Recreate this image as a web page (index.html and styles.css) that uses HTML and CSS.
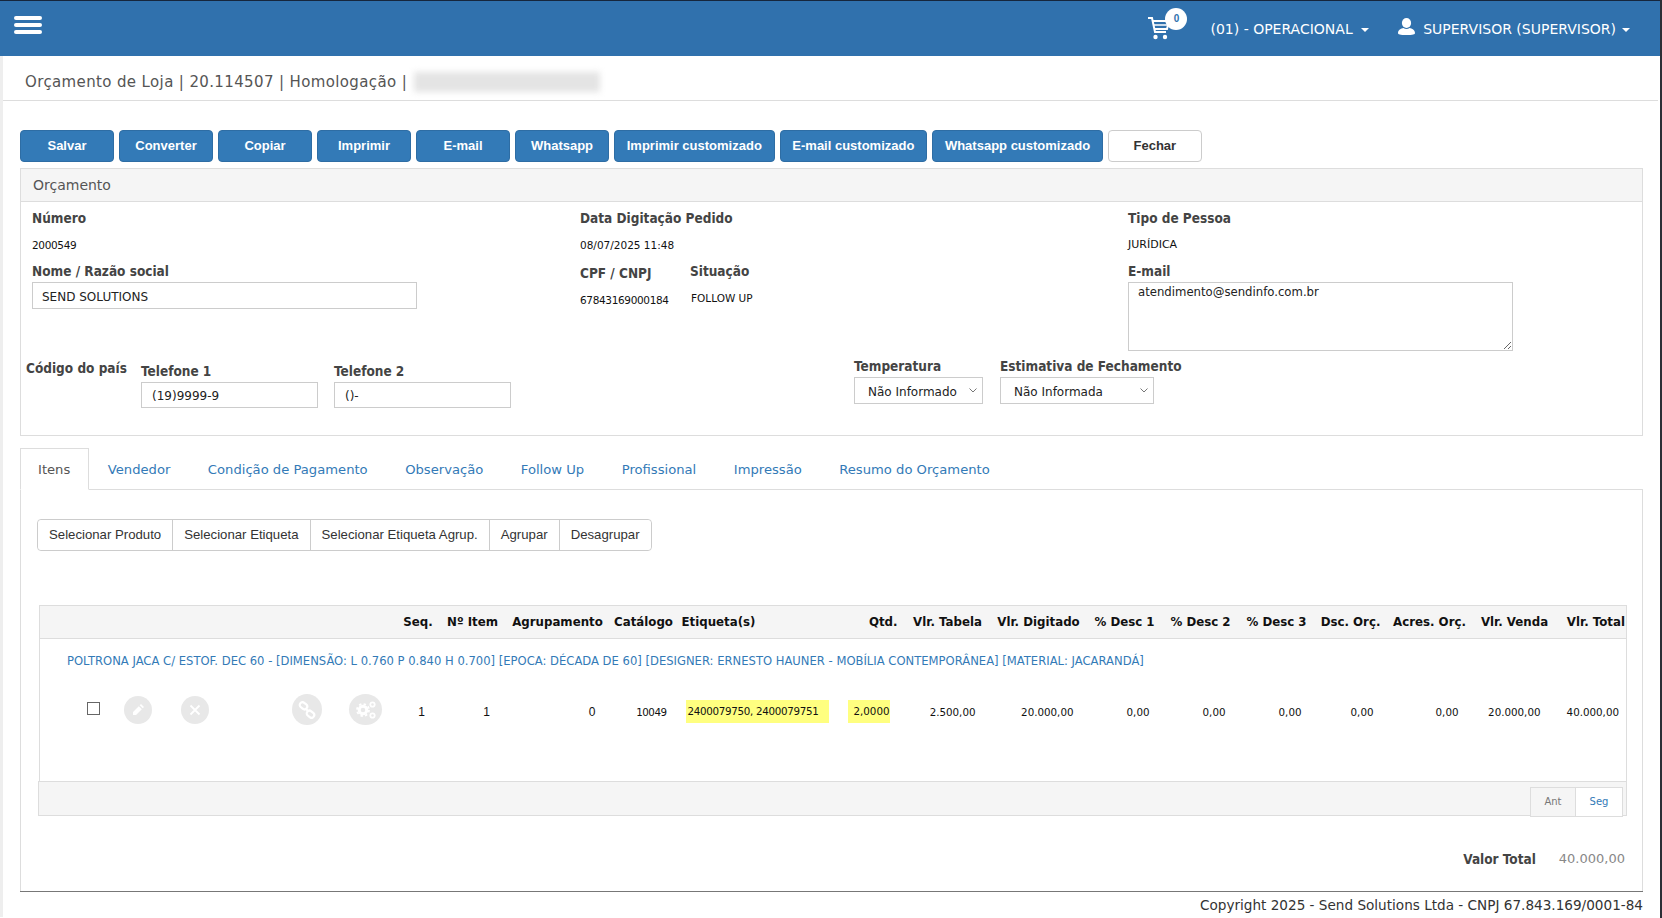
FILE: index.html
```html
<!DOCTYPE html>
<html lang="pt-BR">
<head>
  <meta charset="UTF-8">
  <title>Orçamento de Loja</title>
  <link rel="stylesheet" href="styles.css">
</head>
<body>
  <header class="topbar">
    <div class="burger"><span></span><span></span><span></span></div>
    <div class="topbar-right">
      <div class="cart">
        <svg width="24" height="25" viewBox="0 0 24 25" fill="none" stroke="#fff" stroke-width="2">
          <path d="M1 2h4l3 14h11"/>
          <path d="M6 5h16l-2 8H7.5"/>
          <path d="M7 9h14" stroke-width="1.5"/>
          <circle cx="8.5" cy="21" r="2.2" fill="#fff" stroke="none"/>
          <circle cx="18" cy="21" r="2.2" fill="#fff" stroke="none"/>
        </svg>
        <span class="cart-badge">0</span>
      </div>
      <div class="top-menu store">(01) - OPERACIONAL <i class="caret"></i></div>
      <div class="top-menu user">
        <svg width="17" height="17" viewBox="0 0 17 17" fill="#fff">
          <ellipse cx="8.5" cy="5" rx="4.6" ry="5"/>
          <path d="M0 15c0-3 3-4.500 5.500-5 1.500 1.200 4.500 1.200 6 0 2.500.5 5.500 2 5.500 5 0 1.500-2 2-8.500 2S0 16.500 0 15z"/>
        </svg>
        SUPERVISOR (SUPERVISOR) <i class="caret"></i>
      </div>
    </div>
  </header>

  <div class="page">
    <div class="breadcrumb">
      <span>Orçamento de Loja | 20.114507 | Homologação |</span>
      <div class="redacted"></div>
    </div>

    <div class="actions">
      <button class="btn">Salvar</button>
      <button class="btn">Converter</button>
      <button class="btn">Copiar</button>
      <button class="btn">Imprimir</button>
      <button class="btn">E-mail</button>
      <button class="btn">Whatsapp</button>
      <button class="btn">Imprimir customizado</button>
      <button class="btn">E-mail customizado</button>
      <button class="btn">Whatsapp customizado</button>
      <button class="btn btn-white">Fechar</button>
    </div>

    <section class="panel">
      <div class="panel-head">Orçamento</div>
      <div class="panel-body">
        <div class="fields">
          <div class="field">
            <label>Número</label>
            <div class="value value-num">2000549</div>
            <label>Nome / Razão social</label>
            <input class="input input-name" type="text" value="SEND SOLUTIONS">
          </div>
          <div class="field">
            <label>Data Digitação Pedido</label>
            <div class="value">08/07/2025 11:48</div>
            <div class="cpf-row">
              <div class="cpf">
                <label>CPF / CNPJ</label>
                <div class="value value-num">67843169000184</div>
              </div>
              <div class="situacao">
                <label>Situação</label>
                <div class="value">FOLLOW UP</div>
              </div>
            </div>
          </div>
          <div class="field">
            <label>Tipo de Pessoa</label>
            <div class="value value-wide">JURÍDICA</div>
            <label>E-mail</label>
            <textarea class="input input-email">atendimento@sendinfo.com.br</textarea>
          </div>
        </div>
        <div class="contact-row">
          <label class="country">Código do país</label>
          <div class="phone">
            <label>Telefone 1</label>
            <input class="input input-phone" type="text" value="(19)9999-9">
          </div>
          <div class="phone">
            <label>Telefone 2</label>
            <input class="input input-phone" type="text" value="()-">
          </div>
          <div class="drop drop-temp">
            <label>Temperatura</label>
            <div class="select-wrap">
              <select class="input"><option>Não Informado</option></select>
              <svg class="chevron" width="8" height="5" viewBox="0 0 8 5" fill="none" stroke="#777"><path d="M.5.5L4 4 7.500.5"/></svg>
            </div>
          </div>
          <div class="drop drop-est">
            <label>Estimativa de Fechamento</label>
            <div class="select-wrap">
              <select class="input"><option>Não Informada</option></select>
              <svg class="chevron" width="8" height="5" viewBox="0 0 8 5" fill="none" stroke="#777"><path d="M.5.5L4 4 7.500.5"/></svg>
            </div>
          </div>
        </div>
      </div>
    </section>

    <section class="tabs-area">
      <ul class="tabs">
        <li class="active">Itens</li>
        <li>Vendedor</li>
        <li>Condição de Pagamento</li>
        <li>Observação</li>
        <li>Follow Up</li>
        <li>Profissional</li>
        <li>Impressão</li>
        <li>Resumo do Orçamento</li>
      </ul>
      <div class="tab-content">
        <div class="btn-group">
          <button>Selecionar Produto</button>
          <button>Selecionar Etiqueta</button>
          <button>Selecionar Etiqueta Agrup.</button>
          <button>Agrupar</button>
          <button>Desagrupar</button>
        </div>

        <div class="grid-box">
          <table class="items">
            <colgroup>
              <col class="c-actions"><col class="c-seq"><col class="c-item"><col class="c-agr"><col class="c-cat">
              <col class="c-etq"><col class="c-qtd"><col class="c-tab"><col class="c-dig"><col class="c-d"><col class="c-d">
              <col class="c-d"><col class="c-dsc"><col class="c-acr"><col class="c-ven"><col class="c-tot">
            </colgroup>
            <thead>
              <tr>
                <th></th><th>Seq.</th><th>Nº Item</th><th>Agrupamento</th><th>Catálogo</th>
                <th class="th-etq">Etiqueta(s)</th><th class="th-qtd">Qtd.</th><th>Vlr. Tabela</th><th>Vlr. Digitado</th>
                <th>% Desc 1</th><th>% Desc 2</th><th>% Desc 3</th><th>Dsc. Orç.</th><th>Acres. Orç.</th><th>Vlr. Venda</th><th class="th-tot">Vlr. Total</th>
              </tr>
            </thead>
            <tbody>
              <tr class="desc-row">
                <td colspan="16">POLTRONA JACA C/ ESTOF. DEC 60 - [DIMENSÃO: L 0.760 P 0.840 H 0.700] [EPOCA: DÉCADA DE 60] [DESIGNER: ERNESTO HAUNER - MOBÍLIA CONTEMPORÂNEA] [MATERIAL: JACARANDÁ]</td>
              </tr>
              <tr class="data-row">
                <td>
                  <div class="row-actions">
                    <input class="check" type="checkbox">
                    <span class="round r-edit">
                      <svg width="14" height="14" viewBox="0 0 14 14" fill="#fff"><path d="M10 1l3 3-1.300 1.300-3-3zM7.800 3.200l3 3L5 12H2v-3z"/><path d="M1 13h3l-3-.1z"/></svg>
                    </span>
                    <span class="round r-del">
                      <svg width="12" height="12" viewBox="0 0 12 12" stroke="#fff" stroke-width="1.800" fill="none"><path d="M1.500 1.500l9 9M10.500 1.500l-9 9"/></svg>
                    </span>
                    <span class="round big r-link">
                      <svg width="18" height="18" viewBox="0 0 18 18" stroke="#fff" stroke-width="2.200" fill="none"><rect x="1.500" y="2" width="8" height="5.500" rx="2.700" transform="rotate(40 5.500 4.700)"/><rect x="8.500" y="10.500" width="8" height="5.500" rx="2.700" transform="rotate(40 12.500 13.200)"/><path d="M7.500 7.500l3 3"/></svg>
                    </span>
                    <span class="round big r-cog">
                      <svg width="22" height="20" viewBox="0 0 22 20" fill="none" stroke="#fff"><circle cx="8" cy="10" r="3.800" stroke-width="3"/><circle cx="8" cy="10" r="6" stroke-width="1.800" stroke-dasharray="2.400 2.300"/><circle cx="17.500" cy="4.500" r="2.200" stroke-width="1.800"/><circle cx="17.500" cy="15.500" r="2.200" stroke-width="1.800"/></svg>
                    </span>
                  </div>
                </td>
                <td class="mid seq">1</td>
                <td class="mid item">1</td>
                <td class="mid agr">0</td>
                <td class="num cat">10049</td>
                <td><span class="mark mark-etq">2400079750, 2400079751</span></td>
                <td><span class="mark mark-qtd">2,0000</span></td>
                <td class="num tab">2.500,00</td>
                <td class="num">20.000,00</td>
                <td class="num">0,00</td>
                <td class="num">0,00</td>
                <td class="num">0,00</td>
                <td class="num">0,00</td>
                <td class="num acr">0,00</td>
                <td class="num ven">20.000,00</td>
                <td class="num tot">40.000,00</td>
              </tr>
            </tbody>
          </table>
          <div class="grid-foot">
            <div class="pager">
              <span class="pg-off">Ant</span>
              <span class="pg-on">Seg</span>
            </div>
          </div>
        </div>

        <div class="total-row">
          <span class="total-label">Valor Total</span>
          <span class="total-value">40.000,00</span>
        </div>
      </div>
    </section>

    <footer class="copyright">Copyright 2025 - Send Solutions Ltda - CNPJ 67.843.169/0001-84</footer>
  </div>
</body>
</html>
```

FILE: styles.css
```css
* {
  box-sizing: border-box;
}
html, body {
  height: 918px;
  overflow: hidden;
}
body {
  margin: 0;
  padding-right: 2px;
  background: #fff;
  font-family: "DejaVu Sans", Verdana, sans-serif;
  font-size: 13px;
  color: #333;
  border-right: 2px solid #2b2e36;
}
.topbar {
  height: 56px;
  margin-right: -2px;
  background: #3071ad;
  border-top: 1px solid #16263c;
  display: flex;
  justify-content: space-between;
  color: #fff;
}
.burger {
  margin: 15px 0 0 14px;
  width: 28px;
  display: flex;
  flex-direction: column;
  gap: 3px;
}
.burger span {
  height: 4px;
  border-radius: 2px;
  background: #fff;
}
.topbar-right {
  display: flex;
  align-items: flex-start;
  padding-right: 30px;
}
.cart {
  position: relative;
  width: 24px;
  margin-top: 15px;
}
.cart-badge {
  position: absolute;
  left: 18px;
  top: -8px;
  width: 22px;
  height: 22px;
  border-radius: 50%;
  background: #fff;
  color: #3071ad;
  font: bold 10px/22px "Liberation Sans", Arial, sans-serif;
  text-align: center;
}
.top-menu {
  margin-top: 20px;
  font-size: 14px;
  line-height: 16px;
  white-space: nowrap;
}
.store {
  margin-left: 39px;
}
.store .caret {
  margin-left: 4px;
}
.user {
  margin-left: 29px;
  display: flex;
  align-items: flex-start;
}
.user svg {
  margin: -3px 8px 0 0;
}
.caret {
  display: inline-block;
  margin: 0 0 2px 6px;
  border-left: 4px solid transparent;
  border-right: 4px solid transparent;
  border-top: 4px solid #fff;
}
.user .caret {
  margin-top: 7px;
}
.page {
  border-left: 3px solid #eee;
  height: 861px;
  padding: 0 15px 0 17px;
  position: relative;
}
.breadcrumb {
  height: 45px;
  margin: 0 -15px 0 -17px;
  padding: 16px 0 0 22px;
  border-bottom: 1px solid #ddd;
  display: flex;
  font-size: 15px;
  line-height: 20px;
  letter-spacing: .37px;
  color: #555;
}
.redacted {
  width: 186px;
  height: 20px;
  margin-left: 7px;
  background: #e4e4e4;
  filter: blur(3px);
}
.actions {
  display: flex;
  gap: 5px;
  margin-top: 29px;
}
.btn {
  min-width: 94px;
  height: 32px;
  padding: 0 11.750px 2px;
  background: #337ab7;
  border: 1px solid #2e6da4;
  border-radius: 4px;
  color: #fff;
  font: bold 13px "Liberation Sans", Arial, sans-serif;
}
.btn-white {
  background: #fff;
  border-color: #ccc;
  color: #333;
}
.panel {
  margin-top: 6px;
  height: 268px;
  border: 1px solid #ddd;
}
.panel-head {
  height: 33px;
  padding: 0 12px;
  background: #f5f5f5;
  border-bottom: 1px solid #ddd;
  font-size: 14px;
  line-height: 32px;
  color: #555;
}
.panel-body {
  padding: 6px 0 0 11px;
}
.fields {
  display: grid;
  grid-template-columns: 548px 548px 1fr;
  height: 143px;
}
label {
  display: block;
  font-family: "DejaVu Sans Condensed", "DejaVu Sans", sans-serif;
  font-size: 13.500px;
  line-height: 20px;
  font-weight: bold;
  color: #444;
}
.value {
  margin: 9px 0 8px;
  font-size: 10.500px;
  line-height: 16px;
  color: #111;
}
.value-num {
  letter-spacing: -.35px;
}
.value-wide {
  font-size: 11px;
}
.input {
  display: block;
  border: 1px solid #ccc;
  background: #fff;
  font-family: "DejaVu Sans", sans-serif;
  font-size: 12px;
  color: #222;
  border-radius: 0;
  outline: 0;
}
.input-name {
  width: 385px;
  height: 27px;
  margin-top: 1px;
  padding: 2px 9px 0;
}
.cpf-row {
  display: flex;
}
.cpf {
  width: 110px;
  padding-top: 2px;
}
.situacao .value {
  margin-left: 1px;
}
.input-email {
  width: 385px;
  height: 69px;
  margin-top: 1px;
  padding: 2px 9px;
  font-size: 11.700px;
  resize: both;
}
.contact-row {
  display: flex;
  align-items: flex-start;
  height: 61px;
}
.country {
  margin: 7px 0 0 -6px;
  width: 115px;
}
.phone {
  margin-top: 10px;
  width: 193px;
}
.input-phone {
  width: 177px;
  height: 26px;
  margin-top: 1px;
  padding: 2px 10px 0;
}
.drop {
  margin-top: 5px;
}
.select-wrap {
  position: relative;
  width: fit-content;
  margin-top: 1px;
}
.select-wrap select {
  height: 27px;
  padding: 2px 13px 0;
  appearance: none;
}
.chevron {
  position: absolute;
  right: 6px;
  top: 11px;
}
.drop-temp {
  margin-left: 327px;
}
.drop-temp select {
  width: 129px;
}
.drop-est {
  margin-left: 17px;
}
.drop-est select {
  width: 154px;
}
.tabs-area {
  margin-top: 12px;
}
.tabs {
  list-style: none;
  margin: 0;
  padding: 0;
  height: 42px;
  display: flex;
  border-bottom: 1px solid #ddd;
  font-size: 13.150px;
  color: #337ab7;
}
.tabs li {
  height: 42px;
  padding: 0 18.750px;
  line-height: 44px;
  white-space: nowrap;
}
.tabs .active {
  width: 69px;
  padding: 0 17px;
  line-height: 42px;
  color: #555;
  background: #fff;
  border: 1px solid #ddd;
  border-bottom-color: #fff;
}
.tab-content {
  height: 401px;
  border-left: 1px solid #ddd;
  border-right: 1px solid #ddd;
  padding: 29px 16px 0 16px;
}
.btn-group {
  display: inline-flex;
  height: 32px;
  border: 1px solid #ccc;
  border-radius: 4px;
  vertical-align: top;
}
.btn-group button {
  height: 30px;
  padding: 0 11px 2px;
  border: 0;
  border-left: 1px solid #ccc;
  background: #fff;
  font: 13.200px "Liberation Sans", Arial, sans-serif;
  color: #333;
}
.btn-group button:first-child {
  border-left: 0;
  border-radius: 4px 0 0 4px;
}
.btn-group button:last-child {
  border-radius: 0 4px 4px 0;
}
.grid-box {
  margin-top: 54px;
  width: 1588px;
  margin-left: 2px;
}
.items {
  width: 1587px;
  table-layout: fixed;
  border-collapse: collapse;
  border: 1px solid #ddd;
  border-bottom: 0;
}
.c-actions { width: 357px; }
.c-seq { width: 43px; }
.c-item { width: 66px; }
.c-agr { width: 104px; }
.c-cat { width: 68px; }
.c-etq { width: 171px; }
.c-qtd { width: 56px; }
.c-tab { width: 86px; }
.c-dig { width: 96px; }
.c-d { width: 76px; }
.c-dsc { width: 72px; }
.c-acr { width: 86px; }
.c-ven { width: 84px; }
.c-tot { width: 70px; }
.items th {
  height: 33px;
  padding: 0;
  background: #f5f5f5;
  border-bottom: 1px solid #ddd;
  font-size: 11.800px;
  font-weight: bold;
  color: #111;
  white-space: nowrap;
  text-align: center;
}
.items .th-etq {
  text-align: left;
  padding-left: 4px;
}
.items .th-qtd {
  text-align: right;
  padding-right: 7px;
}
.items .th-tot {
  text-align: right;
  padding-right: 1px;
}
.desc-row td {
  height: 43px;
  padding: 2px 0 0 27px;
  font-size: 11.580px;
  color: #337ab7;
  white-space: nowrap;
}
.data-row td {
  height: 99px;
  padding: 0 0 39px;
  font-size: 10.300px;
  color: #111;
  white-space: nowrap;
}
.row-actions {
  display: flex;
  align-items: center;
  margin-bottom: 4px;
}
.check {
  appearance: none;
  width: 13px;
  height: 13px;
  margin: -3px 0 0 47px;
  border: 1.500px solid #666;
  background: #fff;
}
.round {
  width: 28px;
  height: 28px;
  border-radius: 50%;
  background: #e8e8e8;
  display: flex;
  align-items: center;
  justify-content: center;
}
.round.big {
  width: 30px;
  height: 31px;
}
.r-edit { margin-left: 24px; }
.r-del { margin-left: 29px; }
.r-link { margin-left: 83px; }
.r-cog { margin-left: 27px; width: 33px !important; }
.data-row .mid {
  text-align: center;
  font-family: "Liberation Sans", Arial, sans-serif;
  font-size: 12px;
}
.data-row .seq { padding-left: 7px; }
.data-row .item { padding-left: 28px; }
.data-row .agr { padding-left: 69px; }
.data-row .num {
  text-align: right;
  padding-right: 13px;
}
.data-row .cat { padding-right: 11px; letter-spacing: -.5px; }
.data-row .tab { padding-right: 15px; }
.data-row .acr { padding-right: 14px; }
.data-row .ven { padding-right: 16px; }
.data-row .tot { padding-right: 7px; }
.mark {
  display: block;
  height: 23px;
  line-height: 23px;
  background: #ffff80;
}
.mark-etq {
  width: 143px;
  margin-left: 8px;
  padding-left: 2px;
  letter-spacing: -.3px;
}
.mark-qtd {
  width: 42px;
  margin-left: -1px;
  text-align: right;
}
.grid-foot {
  height: 35px;
  margin-left: -1px;
  background: #f5f5f5;
  border: 1px solid #ddd;
  display: flex;
  justify-content: flex-end;
}
.pager {
  display: flex;
  height: 30px;
  margin: 5px 3px 0 0;
  border: 1px solid #ddd;
  font-size: 10px;
  line-height: 28px;
  text-align: center;
}
.pg-off {
  width: 44px;
  color: #777;
  background: #f5f5f5;
}
.pg-on {
  width: 47px;
  color: #337ab7;
  background: #fff;
  border-left: 1px solid #ddd;
}
.total-row {
  margin-top: 33px;
  display: flex;
  justify-content: flex-end;
  padding-right: 1px;
  line-height: 20px;
}
.total-label {
  font-family: "DejaVu Sans Condensed", "DejaVu Sans", sans-serif;
  font-weight: bold;
  font-size: 13.500px;
  color: #444;
}
.total-value {
  margin-left: 23px;
  font-size: 13px;
  color: #888;
}
.copyright {
  height: 27px;
  border-top: 1px solid #777;
  text-align: right;
  font-size: 13.600px;
  line-height: 26px;
  color: #333;
}
```
